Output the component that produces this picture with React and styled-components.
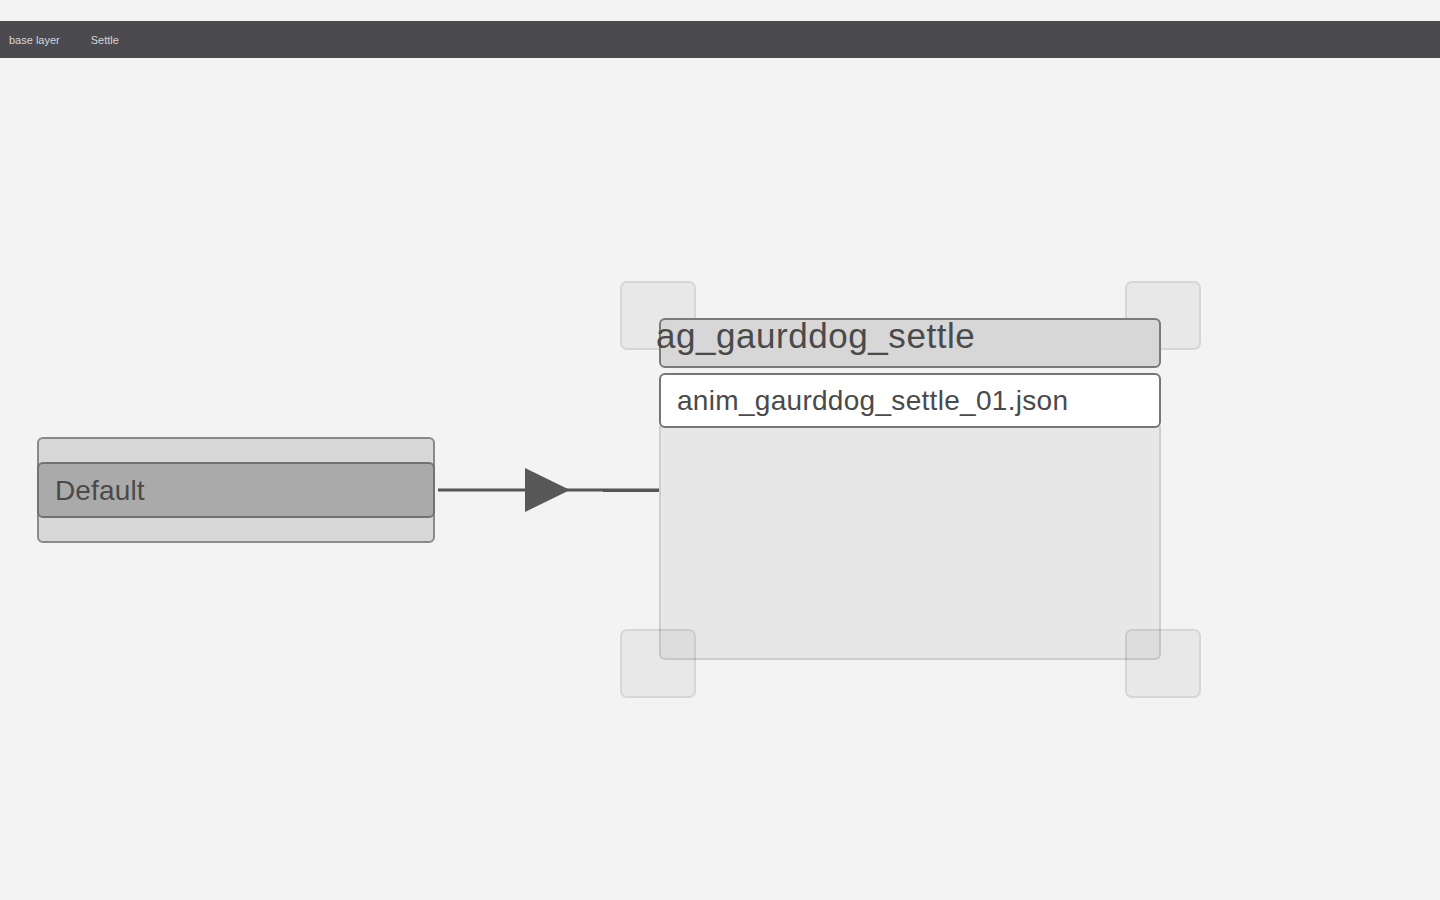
import React from "react";
import styled, { createGlobalStyle } from "styled-components";

const Global = createGlobalStyle`
  html, body { margin: 0; padding: 0; background: #f3f3f3; }
  body { font-family: "Liberation Sans", Arial, sans-serif; }
  * { box-sizing: border-box; }
`;

const Page = styled.div`
  width: 1440px;
  height: 900px;
  padding-top: 21px;
  display: flex;
  flex-direction: column;
  overflow: hidden;
`;

const Breadcrumbs = styled.nav`
  height: 37px;
  background: #4b4a4f;
  display: flex;
  align-items: center;
  gap: 31px;
  padding: 2px 9px 0;
`;

const Crumb = styled.span`
  font-size: 11px;
  color: #d6d6d6;
  line-height: 1;
`;

const Canvas = styled.div`
  position: relative;
  flex: 1;
`;

const StateNode = styled.div`
  position: absolute;
  left: ${(p) => p.$x}px;
  top: ${(p) => p.$y}px;
  width: ${(p) => p.$w}px;
`;

const DefaultFrame = styled.div`
  height: 106px;
  background: #d7d7d7;
  border: 2px solid #8a8a8a;
  border-radius: 6px;
  padding-top: 23px;
  display: flex;
  flex-direction: column;
`;

const DefaultBar = styled.div`
  height: 56px;
  margin: 0 -2px;
  background: #aaaaaa;
  border: 2px solid #727272;
  border-radius: 6px;
  display: flex;
  align-items: center;
  padding: 1px 0 0 16px;
  font-size: 28px;
  letter-spacing: 0.15px;
  color: #4a4a4a;
`;

const NodeColumn = styled.div`
  display: flex;
  flex-direction: column;
  height: 342px;
`;

const NodeHeader = styled.div`
  position: relative;
  z-index: 2;
  height: 50px;
  background: #d7d7d7;
  border: 2px solid #7a7a7a;
  border-radius: 6px;
  overflow: visible;
`;

const NodeTitle = styled.div`
  font-size: 35px;
  letter-spacing: 0.55px;
  line-height: 35px;
  margin: -2px 0 0 -5px;
  color: #4a4a4a;
  white-space: nowrap;
`;

const ClipRow = styled.div`
  position: relative;
  z-index: 2;
  margin-top: 5px;
  height: 55px;
  background: #ffffff;
  border: 2px solid #767676;
  border-radius: 6px;
  padding: 0 16px;
  display: flex;
  align-items: center;
  font-size: 28px;
  letter-spacing: 0.3px;
  color: #4a4a4a;
  white-space: nowrap;
`;

const NodeBody = styled.div`
  flex: 1;
  margin-top: -2px;
  background: #e7e7e7;
  border: 2px solid #cfcfcf;
  border-top: none;
  border-radius: 0 0 6px 6px;
`;

const Handle = styled.div`
  position: absolute;
  z-index: 1;
  width: 76px;
  height: 69px;
  background: rgba(0, 0, 0, 0.045);
  border: 2px solid rgba(0, 0, 0, 0.08);
  border-radius: 7px;
  ${(p) => (p.$top ? "top: -37px;" : "bottom: -38px;")}
  ${(p) => (p.$left ? "left: -39px;" : "right: -40px;")}
`;

const Transition = styled.svg`
  position: absolute;
  left: 430px;
  top: 402px;
  overflow: visible;
`;

export default function App() {
  return (
    <>
      <Global />
      <Page>
        <Breadcrumbs>
          <Crumb>base layer</Crumb>
          <Crumb>Settle</Crumb>
        </Breadcrumbs>
        <Canvas>
          <StateNode $x={37} $y={379} $w={398}>
            <DefaultFrame>
              <DefaultBar>Default</DefaultBar>
            </DefaultFrame>
          </StateNode>

          <Transition width="240" height="60" viewBox="0 0 240 60">
            <line x1="8" y1="30" x2="173" y2="30" stroke="#555" strokeWidth="3" />
            <line x1="173" y1="30.3" x2="229" y2="30.3" stroke="#555" strokeWidth="3.4" />
            <polygon points="95,8 140,30 95,52" fill="#585858" />
          </Transition>

          <StateNode $x={659} $y={260} $w={502}>
            <Handle $top $left />
            <Handle $top />
            <NodeColumn>
              <NodeHeader>
                <NodeTitle>ag_gaurddog_settle</NodeTitle>
              </NodeHeader>
              <ClipRow>anim_gaurddog_settle_01.json</ClipRow>
              <NodeBody />
            </NodeColumn>
            <Handle $left />
            <Handle />
          </StateNode>
        </Canvas>
      </Page>
    </>
  );
}
